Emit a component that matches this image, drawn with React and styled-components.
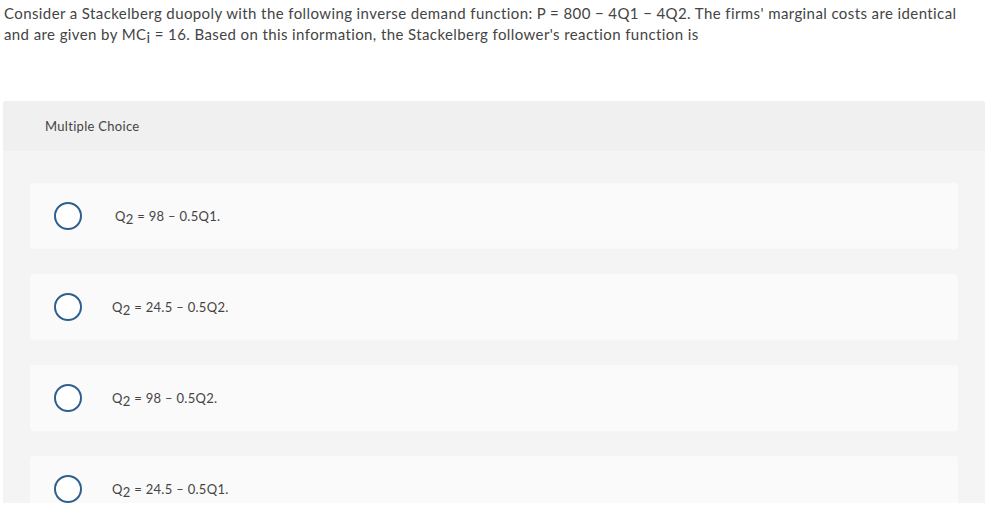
import React from 'react'
import { styled, createGlobalStyle } from 'styled-components'

const Global = createGlobalStyle`
  body {
    margin: 0;
    background: #fff;
    font-family: Lato, 'Open Sans', sans-serif;
    color: #333;
  }
`

const Page = styled.div`
  height: 500px;
  overflow: hidden;
  padding: 3px 6px 0 3px;
`

const Question = styled.p`
  margin: 0 0 0 1px;
  font-size: 15px;
  line-height: 21px;
  letter-spacing: 0.4px;
  color: #444;
`

const Sub = styled.sub`
  font-size: 100%;
  line-height: 0;
  vertical-align: baseline;
  position: relative;
  top: 3px;
`

const Panel = styled.section`
  margin-top: 56px;
  background: #f4f4f4;
  border-radius: 3px;
  padding-bottom: 20px;
`

const PanelHead = styled.div`
  height: 50px;
  display: flex;
  align-items: center;
  padding-left: 42px;
  background: #f0f0f0;
  border-radius: 3px 3px 0 0;
  font-size: 13px;
  letter-spacing: 0.3px;
  color: #444;
`

const Options = styled.ul`
  list-style: none;
  margin: 0;
  padding: 32px 27px 0 27px;
  display: flex;
  flex-direction: column;
  gap: 25px;
`

const Option = styled.li`
  height: 66px;
  display: flex;
  align-items: center;
  padding-left: 24px;
  background: #fafafa;
  border-radius: 4px;
`

const Radio = styled.span`
  width: 24px;
  height: 24px;
  border: 2px solid #2f5f8f;
  border-radius: 50%;
  background: #fff;
  flex-shrink: 0;
`

const Label = styled.span`
  margin-left: ${p => p.$offset}px;
  font-size: 13px;
  letter-spacing: 0.3px;
  color: #444;
`

const choices = [
  { rest: ' = 98 – 0.5Q1.', offset: 33 },
  { rest: ' = 24.5 – 0.5Q2.', offset: 30 },
  { rest: ' = 98 – 0.5Q2.', offset: 30 },
  { rest: ' = 24.5 – 0.5Q1.', offset: 30 },
]

const App = () => {
  return (
    <>
      <Global />
      <Page>
        <Question>
          Consider a Stackelberg duopoly with the following inverse demand function: P = 800 − 4Q1 − 4Q2. The firms' marginal costs are identical and are given by MC<Sub>i</Sub> = 16. Based on this information, the Stackelberg follower's reaction function is
        </Question>
        <Panel>
          <PanelHead>Multiple Choice</PanelHead>
          <Options>
            {choices.map((c, i) => (
              <Option key={i}>
                <Radio />
                <Label $offset={c.offset}>
                  Q<Sub>2</Sub>{c.rest}
                </Label>
              </Option>
            ))}
          </Options>
        </Panel>
      </Page>
    </>
  )
}

export default App
